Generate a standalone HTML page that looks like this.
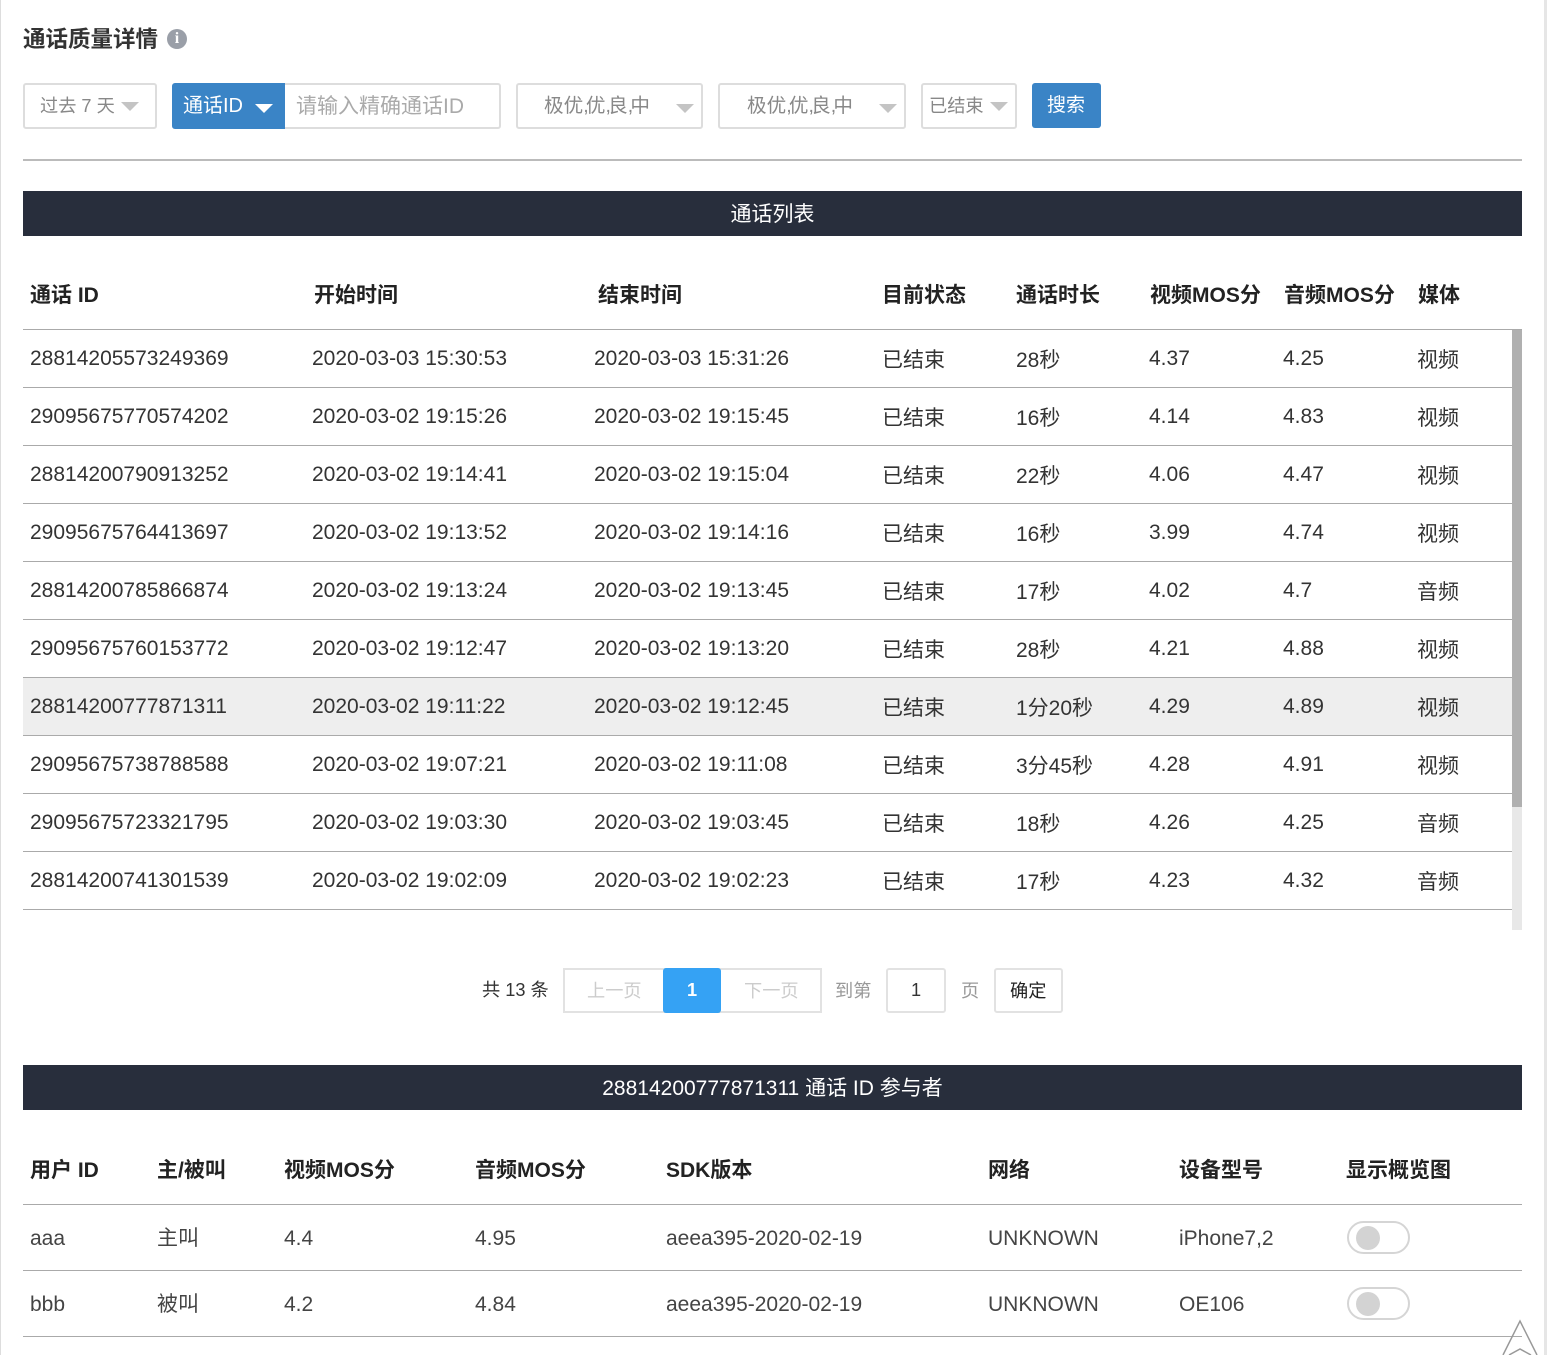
<!DOCTYPE html>
<html lang="zh">
<head>
<meta charset="utf-8">
<style>
html,body{margin:0;padding:0;background:#fff}
#p{position:relative;width:1547px;height:1355px;overflow:hidden;background:#fff;font-family:"Liberation Sans","Noto Sans CJK SC",sans-serif;font-size:21px;color:#333}
#p div,#p span{position:absolute;white-space:nowrap;box-sizing:border-box}
.t{line-height:30px;height:30px;margin-top:1px}
.t i{font-style:normal;letter-spacing:-2.8px}
.bx{border:2px solid #ddd;border-radius:3px;background:#fff}
.ar{width:0;height:0;border-left:9px solid transparent;border-right:9px solid transparent;border-top:9px solid #c4c4c4}
.bar{left:23px;width:1499px;height:45px;background:#282e3c;color:#fff;text-align:center;line-height:47px}
.ln{left:23px;height:2px;background:#aaa}
.h{font-weight:bold;color:#222;line-height:30px;height:30px;margin-top:1px}
.g{color:#444}
.tg{left:1347px;width:63px;height:33px;border:2px solid #d5d5d5;border-radius:17px;background:#fff}
.kn{left:7px;top:3px;width:24px;height:24px;border-radius:50%;background:#d3d3d3}
</style>
</head>
<body>
<div id="p">
<div style="left:0;top:0;width:1px;height:1355px;background:#ddd"></div>
<div style="left:1544px;top:0;width:3px;height:1355px;background:#e6e6e6"></div>

<div class="t" style="left:23px;top:24px;font-size:22.5px;font-weight:bold;color:#333">通话质量详情</div>
<div style="left:167px;top:29px;width:20px;height:20px;border-radius:50%;background:#9a9fa8;color:#fff;font:bold 16px/20px 'Liberation Serif',serif;text-align:center">i</div>

<div class="bx" style="left:23px;top:83px;width:134px;height:46px"></div>
<div class="t" style="left:40px;top:90px;font-size:18.2px;color:#888">过去 7 天</div>
<div class="ar" style="left:121px;top:102px"></div>

<div style="left:172px;top:83px;width:113px;height:46px;background:#3a84c6;border-radius:3px 0 0 3px"></div>
<div class="t" style="left:183px;top:90px;font-size:20px;color:#fff">通话ID</div>
<div class="ar" style="left:255px;top:104px;border-top-color:#fff"></div>
<div style="left:285px;top:83px;width:216px;height:46px;border:2px solid #ddd;border-left:0;border-radius:0 3px 3px 0"></div>
<div class="t" style="left:296px;top:91px;color:#aaa">请输入精确通话ID</div>

<div class="bx" style="left:516px;top:83px;width:187px;height:46px"></div>
<div class="t" style="left:544px;top:90px;font-size:19.6px;color:#888">极优<i>,</i>优<i>,</i>良<i>,</i>中</div>
<div class="ar" style="left:676px;top:104px"></div>

<div class="bx" style="left:718px;top:83px;width:188px;height:46px"></div>
<div class="t" style="left:747px;top:90px;font-size:19.6px;color:#888">极优<i>,</i>优<i>,</i>良<i>,</i>中</div>
<div class="ar" style="left:879px;top:104px"></div>

<div class="bx" style="left:921px;top:83px;width:96px;height:46px"></div>
<div class="t" style="left:929px;top:90px;font-size:18.2px;color:#888">已结束</div>
<div class="ar" style="left:990px;top:102px"></div>

<div style="left:1032px;top:83px;width:69px;height:45px;background:#3a84c6;border-radius:3px"></div>
<div class="t" style="left:1047px;top:90px;font-size:19px;color:#fff">搜索</div>

<div class="ln" style="top:159px;width:1499px;background:#bbb"></div>

<div class="bar" style="top:191px">通话列表</div>

<div class="h" style="left:30px;top:280px">通话 ID</div>
<div class="h" style="left:314px;top:280px">开始时间</div>
<div class="h" style="left:598px;top:280px">结束时间</div>
<div class="h" style="left:882px;top:280px">目前状态</div>
<div class="h" style="left:1016px;top:280px">通话时长</div>
<div class="h" style="left:1150px;top:280px">视频MOS分</div>
<div class="h" style="left:1284px;top:280px">音频MOS分</div>
<div class="h" style="left:1418px;top:280px">媒体</div>

<div class="ln" style="top:329px;width:1499px;height:1px"></div>
<div style="left:1512px;top:330px;width:10px;height:600px;background:#e8e8e8"></div>
<div style="left:1512px;top:330px;width:10px;height:477px;background:#b0b0b0"></div>

<div style="left:0;top:330px;width:1512px;height:600px;overflow:hidden;color:#333">
<div style="left:23px;top:348px;width:1489px;height:57px;background:#eee"></div>

<div class="t" style="left:30px;top:13px">28814205573249369</div><div class="t" style="left:312px;top:13px">2020-03-03 15:30:53</div><div class="t" style="left:594px;top:13px">2020-03-03 15:31:26</div><div class="t" style="left:882px;top:15px">已结束</div><div class="t" style="left:1016px;top:15px">28秒</div><div class="t" style="left:1149px;top:13px">4.37</div><div class="t" style="left:1283px;top:13px">4.25</div><div class="t" style="left:1417px;top:15px">视频</div>
<div style="left:23px;top:57px;width:1489px;height:1px;background:#aaa"></div>

<div class="t" style="left:30px;top:71px">29095675770574202</div><div class="t" style="left:312px;top:71px">2020-03-02 19:15:26</div><div class="t" style="left:594px;top:71px">2020-03-02 19:15:45</div><div class="t" style="left:882px;top:73px">已结束</div><div class="t" style="left:1016px;top:73px">16秒</div><div class="t" style="left:1149px;top:71px">4.14</div><div class="t" style="left:1283px;top:71px">4.83</div><div class="t" style="left:1417px;top:73px">视频</div>
<div style="left:23px;top:115px;width:1489px;height:1px;background:#aaa"></div>

<div class="t" style="left:30px;top:129px">28814200790913252</div><div class="t" style="left:312px;top:129px">2020-03-02 19:14:41</div><div class="t" style="left:594px;top:129px">2020-03-02 19:15:04</div><div class="t" style="left:882px;top:131px">已结束</div><div class="t" style="left:1016px;top:131px">22秒</div><div class="t" style="left:1149px;top:129px">4.06</div><div class="t" style="left:1283px;top:129px">4.47</div><div class="t" style="left:1417px;top:131px">视频</div>
<div style="left:23px;top:173px;width:1489px;height:1px;background:#aaa"></div>

<div class="t" style="left:30px;top:187px">29095675764413697</div><div class="t" style="left:312px;top:187px">2020-03-02 19:13:52</div><div class="t" style="left:594px;top:187px">2020-03-02 19:14:16</div><div class="t" style="left:882px;top:189px">已结束</div><div class="t" style="left:1016px;top:189px">16秒</div><div class="t" style="left:1149px;top:187px">3.99</div><div class="t" style="left:1283px;top:187px">4.74</div><div class="t" style="left:1417px;top:189px">视频</div>
<div style="left:23px;top:231px;width:1489px;height:1px;background:#aaa"></div>

<div class="t" style="left:30px;top:245px">28814200785866874</div><div class="t" style="left:312px;top:245px">2020-03-02 19:13:24</div><div class="t" style="left:594px;top:245px">2020-03-02 19:13:45</div><div class="t" style="left:882px;top:247px">已结束</div><div class="t" style="left:1016px;top:247px">17秒</div><div class="t" style="left:1149px;top:245px">4.02</div><div class="t" style="left:1283px;top:245px">4.7</div><div class="t" style="left:1417px;top:247px">音频</div>
<div style="left:23px;top:289px;width:1489px;height:1px;background:#aaa"></div>

<div class="t" style="left:30px;top:303px">29095675760153772</div><div class="t" style="left:312px;top:303px">2020-03-02 19:12:47</div><div class="t" style="left:594px;top:303px">2020-03-02 19:13:20</div><div class="t" style="left:882px;top:305px">已结束</div><div class="t" style="left:1016px;top:305px">28秒</div><div class="t" style="left:1149px;top:303px">4.21</div><div class="t" style="left:1283px;top:303px">4.88</div><div class="t" style="left:1417px;top:305px">视频</div>
<div style="left:23px;top:347px;width:1489px;height:1px;background:#aaa"></div>

<div class="t" style="left:30px;top:361px">28814200777871311</div><div class="t" style="left:312px;top:361px">2020-03-02 19:11:22</div><div class="t" style="left:594px;top:361px">2020-03-02 19:12:45</div><div class="t" style="left:882px;top:363px">已结束</div><div class="t" style="left:1016px;top:363px">1分20秒</div><div class="t" style="left:1149px;top:361px">4.29</div><div class="t" style="left:1283px;top:361px">4.89</div><div class="t" style="left:1417px;top:363px">视频</div>
<div style="left:23px;top:405px;width:1489px;height:1px;background:#aaa"></div>

<div class="t" style="left:30px;top:419px">29095675738788588</div><div class="t" style="left:312px;top:419px">2020-03-02 19:07:21</div><div class="t" style="left:594px;top:419px">2020-03-02 19:11:08</div><div class="t" style="left:882px;top:421px">已结束</div><div class="t" style="left:1016px;top:421px">3分45秒</div><div class="t" style="left:1149px;top:419px">4.28</div><div class="t" style="left:1283px;top:419px">4.91</div><div class="t" style="left:1417px;top:421px">视频</div>
<div style="left:23px;top:463px;width:1489px;height:1px;background:#aaa"></div>

<div class="t" style="left:30px;top:477px">29095675723321795</div><div class="t" style="left:312px;top:477px">2020-03-02 19:03:30</div><div class="t" style="left:594px;top:477px">2020-03-02 19:03:45</div><div class="t" style="left:882px;top:479px">已结束</div><div class="t" style="left:1016px;top:479px">18秒</div><div class="t" style="left:1149px;top:477px">4.26</div><div class="t" style="left:1283px;top:477px">4.25</div><div class="t" style="left:1417px;top:479px">音频</div>
<div style="left:23px;top:521px;width:1489px;height:1px;background:#aaa"></div>

<div class="t" style="left:30px;top:535px">28814200741301539</div><div class="t" style="left:312px;top:535px">2020-03-02 19:02:09</div><div class="t" style="left:594px;top:535px">2020-03-02 19:02:23</div><div class="t" style="left:882px;top:537px">已结束</div><div class="t" style="left:1016px;top:537px">17秒</div><div class="t" style="left:1149px;top:535px">4.23</div><div class="t" style="left:1283px;top:535px">4.32</div><div class="t" style="left:1417px;top:537px">音频</div>
<div style="left:23px;top:579px;width:1489px;height:1px;background:#aaa"></div>

<div class="t" style="left:882px;top:596px">已结束</div><div class="t" style="left:1016px;top:596px">17秒</div>
</div>

<div class="t" style="left:482px;top:974px;font-size:18.2px">共 13 条</div>
<div style="left:563px;top:968px;width:259px;height:45px;border:2px solid #e2e2e2;background:#fff"></div>
<div class="t" style="left:587px;top:975px;font-size:18.2px;color:#ccc">上一页</div>
<div style="left:663px;top:968px;width:58px;height:45px;background:#35a2f4;border-radius:3px;color:#fff;text-align:center;font-size:18.2px;font-weight:bold;line-height:44px">1</div>
<div class="t" style="left:744px;top:975px;font-size:18.2px;color:#ccc">下一页</div>
<div class="t" style="left:835px;top:975px;font-size:18.2px;color:#999">到第</div>
<div class="bx" style="left:886px;top:968px;width:60px;height:45px;border-color:#e2e2e2;text-align:center;font-size:18.2px;line-height:41px;color:#333">1</div>
<div class="t" style="left:961px;top:975px;font-size:18.2px;color:#999">页</div>
<div class="bx" style="left:994px;top:968px;width:69px;height:45px;border-color:#e2e2e2"></div>
<div class="t" style="left:1010px;top:975px;font-size:18.2px;color:#222">确定</div>

<div class="bar" style="top:1065px">28814200777871311 通话 ID 参与者</div>

<div class="h" style="left:30px;top:1155px">用户 ID</div>
<div class="h" style="left:157px;top:1155px">主/被叫</div>
<div class="h" style="left:284px;top:1155px">视频MOS分</div>
<div class="h" style="left:475px;top:1155px">音频MOS分</div>
<div class="h" style="left:666px;top:1155px">SDK版本</div>
<div class="h" style="left:988px;top:1155px">网络</div>
<div class="h" style="left:1179px;top:1155px">设备型号</div>
<div class="h" style="left:1346px;top:1155px">显示概览图</div>
<div class="ln" style="top:1204px;width:1499px;height:1px"></div>

<div class="t g" style="left:30px;top:1223px">aaa</div>
<div class="t g" style="left:157px;top:1223px">主叫</div>
<div class="t g" style="left:284px;top:1223px">4.4</div>
<div class="t g" style="left:475px;top:1223px">4.95</div>
<div class="t g" style="left:666px;top:1223px">aeea395-2020-02-19</div>
<div class="t g" style="left:988px;top:1223px">UNKNOWN</div>
<div class="t g" style="left:1179px;top:1223px">iPhone7,2</div>
<div class="tg" style="top:1221px"><div class="kn"></div></div>
<div class="ln" style="top:1270px;width:1499px;height:1px"></div>

<div class="t g" style="left:30px;top:1289px">bbb</div>
<div class="t g" style="left:157px;top:1289px">被叫</div>
<div class="t g" style="left:284px;top:1289px">4.2</div>
<div class="t g" style="left:475px;top:1289px">4.84</div>
<div class="t g" style="left:666px;top:1289px">aeea395-2020-02-19</div>
<div class="t g" style="left:988px;top:1289px">UNKNOWN</div>
<div class="t g" style="left:1179px;top:1289px">OE106</div>
<div class="tg" style="top:1287px"><div class="kn"></div></div>
<div class="ln" style="top:1336px;width:1499px;height:1px"></div>

<svg style="position:absolute;left:1497px;top:1315px" width="46" height="40" viewBox="0 0 46 40" fill="none" stroke="#999" stroke-width="1.5"><path d="M6 40L23 6L40 40"/><path d="M12 40L23 34L34 40"/></svg>
</div>
</body>
</html>
